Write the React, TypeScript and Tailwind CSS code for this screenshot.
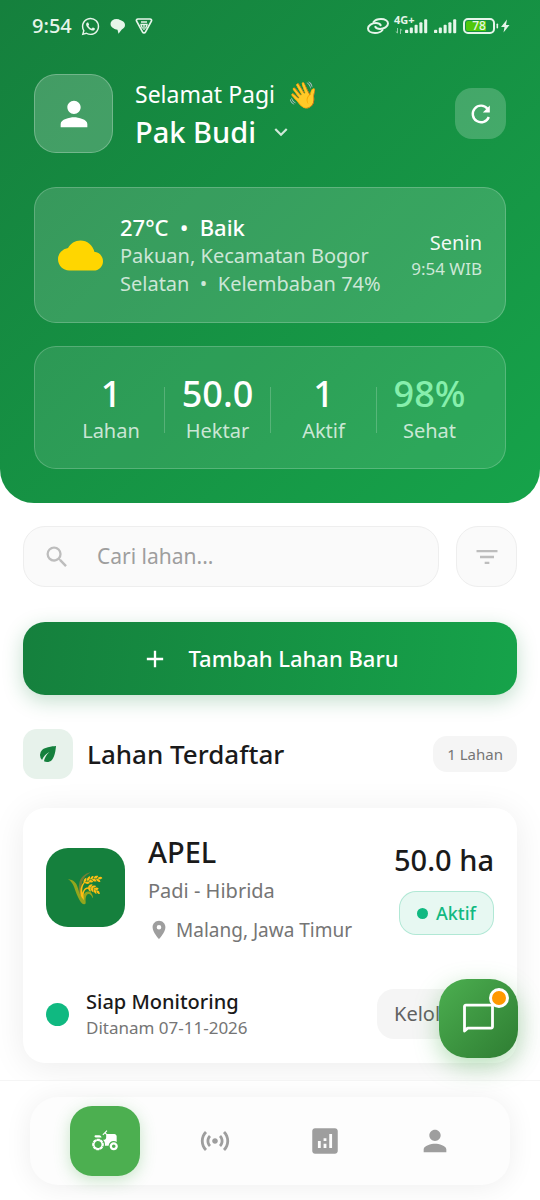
import type { ReactNode } from "react";
import {
  MdAdd,
  MdAgriculture,
  MdAnalytics,
  MdCloud,
  MdEco,
  MdFilterList,
  MdKeyboardArrowDown,
  MdLocationOn,
  MdPerson,
  MdSearch,
  MdSensors,
  MdWhatsapp,
} from "react-icons/md";

function SignalBars() {
  return (
    <svg viewBox="0 0 24 16" className="h-4 w-[23px]" fill="currentColor" aria-hidden="true">
      <rect x="0" y="12" width="3.4" height="3.4" rx="1" />
      <rect x="5" y="9.5" width="3.2" height="6" rx="1" />
      <rect x="10" y="6.8" width="3.2" height="8.7" rx="1" />
      <rect x="15" y="4" width="3.2" height="11.5" rx="1" />
      <rect x="20" y="1" width="3.2" height="14.5" rx="1" />
    </svg>
  );
}

function StatusBar() {
  return (
    <div className="flex h-[52px] items-center justify-between pr-[29px] pl-[32px] text-[#e6f5ea]">
      <div className="flex items-center gap-2">
        <span className="text-[20px] leading-6 font-medium">9:54</span>
        <MdWhatsapp className="h-[21px] w-[21px]" aria-hidden="true" />
        <svg viewBox="0 0 18 18" className="h-[18px] w-[18px]" aria-hidden="true">
          <ellipse cx="7.500" cy="7" rx="6" ry="5" fill="currentColor" />
          <path d="M9.500 3.200c4 0 6.500 2 6.500 4.800 0 2-1.100 3.500-3.200 4.400L9.500 16.800 8.500 12.800C5.200 12.500 3.200 10.600 3.200 8c0-2.800 2.500-4.800 6.300-4.800z" fill="currentColor" />
        </svg>
        <svg viewBox="0 0 18 18" className="h-[18px] w-[18px]" fill="none" stroke="currentColor" aria-hidden="true">
          <path d="M3 2h12c1.300 0 2 1.100 1.400 2.200l-6 10.900c-.6 1.100-2.200 1.100-2.800 0l-6-10.900C1 3.100 1.700 2 3 2z" strokeWidth="1.700" />
          <path d="M6 5h6M5.300 7.500h7.400M6 8l1.500 3.600M12 8l-1.500 3.600M9 8v5" strokeWidth="1.300" />
        </svg>
      </div>
      <div className="flex items-center">
        <svg viewBox="0 0 24 18" className="h-[18px] w-6" fill="none" stroke="currentColor" strokeWidth="2" strokeLinecap="round" aria-hidden="true">
          <path d="M7.500 5C9 3 12 2 15 2c4 0 7 1.800 7 4.500 0 3-4 5.500-8 5.500-2.300 0-4-.8-4.700-2.200" />
          <path d="M16.500 13C15 15 12 16 9 16c-4 0-7-1.800-7-4.500C2 8.500 6 6 10 6c2.300 0 4 .8 4.700 2.200" />
        </svg>
        <div className="relative ml-[5px]">
          <div className="pl-[10px]">
            <SignalBars />
          </div>
          <span className="absolute -top-1 -left-px text-[11px] leading-3 font-bold">4G+</span>
          <svg viewBox="0 0 8 6" className="absolute bottom-0 left-0 h-[6px] w-[8px] opacity-60" fill="none" stroke="currentColor" aria-hidden="true">
            <path d="M2.500 0v5L.8 3.500M5.500 6V1l1.700 1.500" />
          </svg>
        </div>
        <div className="ml-[6px]">
          <SignalBars />
        </div>
        <div className="ml-[6px] flex h-4 w-8 items-center justify-center rounded-[5px] border-2 border-current bg-linear-to-r from-[#50c80c] from-75% to-transparent to-75% bg-clip-content p-px text-[12px] leading-3 font-medium">
          78
        </div>
        <svg viewBox="0 0 14 16" className="h-4 w-[16px]" fill="currentColor" aria-hidden="true">
          <rect x="0.500" y="5.500" width="1.600" height="5" rx="0.800" />
          <path d="M11 1.500 5 9h3.500L7.500 14.500 13.500 7H10z" />
        </svg>
      </div>
    </div>
  );
}

const stats = [
  { value: "1", label: "Lahan", color: "text-white" },
  { value: "50.0", label: "Hektar", color: "text-white" },
  { value: "1", label: "Aktif", color: "text-white" },
  { value: "98%", label: "Sehat", color: "text-[#86efac]" },
];

function Header() {
  return (
    <header className="rounded-b-[34px] bg-linear-to-br from-[#15803d] to-[#16a34a] pb-[34px] text-white">
      <StatusBar />
      <div className="px-[34px] pt-[22px]">
        <div className="flex items-center">
          <div className="flex h-[79px] w-[79px] items-center justify-center rounded-[22px] border border-white/25 bg-white/20">
            <MdPerson className="h-10 w-10" aria-hidden="true" />
          </div>
          <div className="ml-[22px] flex-1">
            <p className="flex items-center gap-3 text-[23px] leading-9">
              Selamat Pagi
              <span className="text-[26px]">👋</span>
            </p>
            <button type="button" className="flex items-center gap-3 text-[29px] leading-10 font-medium">
              Pak Budi
              <MdKeyboardArrowDown className="h-[26px] w-[26px] opacity-80" aria-hidden="true" />
            </button>
          </div>
          <button type="button" aria-label="Muat ulang" className="flex h-[51px] w-[51px] items-center justify-center rounded-[17px] bg-white/20">
            <svg viewBox="0 0 24 24" className="h-6 w-6" fill="none" stroke="currentColor" strokeWidth="2.400" aria-hidden="true">
              <path d="M19.800 15A8.300 8.300 0 1 1 18.500 6.700" />
              <path d="M20.800 3.500v7h-7z" fill="currentColor" stroke="none" />
            </svg>
          </button>
        </div>

        <section className="mt-[34px] flex items-center rounded-[22px] border border-white/20 bg-white/15 px-[23px] py-[24px]">
          <MdCloud className="h-[45px] w-[45px] shrink-0 text-[#ffd600]" aria-hidden="true" />
          <div className="ml-[17px] flex-1">
            <p className="text-[22px] leading-[30px] font-medium whitespace-pre">27°C  •  Baik</p>
            <p className="text-[20px] leading-7 whitespace-nowrap text-white/75">
              Pakuan, Kecamatan Bogor
              <br />
              <span className="whitespace-pre">Selatan  •  Kelembaban 74%</span>
            </p>
          </div>
          <div className="text-right">
            <p className="text-[20px] leading-7 text-white/95">Senin</p>
            <p className="text-[17px] leading-6 whitespace-nowrap text-white/75">9:54 WIB</p>
          </div>
        </section>

        <section className="mt-[23px] flex items-center rounded-[22px] border border-white/20 bg-white/10 px-[23px] pt-[25px] pb-[21px]">
          {stats.map((s, i) => (
            <div key={s.label} className="flex flex-1 items-center">
              {i > 0 && <div className="h-[46px] w-px bg-white/20" />}
              <div className="flex-1 text-center">
                <p className={`text-[36px] leading-[43px] font-medium ${s.color}`}>{s.value}</p>
                <p className="text-[20px] leading-8 text-white/75">{s.label}</p>
              </div>
            </div>
          ))}
        </section>
      </div>
    </header>
  );
}

function FieldCard() {
  return (
    <article className="mt-[29px] rounded-[22px] bg-white p-[23px] shadow-[0_4px_34px_rgba(0,0,0,0.08)]">
      <div className="flex items-center">
        <div className="flex h-[79px] w-[79px] items-center justify-center rounded-[22px] bg-[#15803d] text-[31px]">
          🌾
        </div>
        <div className="ml-[23px] flex-1">
          <h3 className="text-[29px] leading-[42px] font-medium">APEL</h3>
          <p className="text-[20px] leading-9 text-[#757575]">Padi - Hibrida</p>
          <p className="mt-[7px] flex items-center gap-[6px] text-[19px] leading-7 text-[#757575]">
            <MdLocationOn className="h-[22px] w-[22px] text-[#9e9e9e]" aria-hidden="true" />
            Malang, Jawa Timur
          </p>
        </div>
        <div className="flex flex-col items-end gap-[11px]">
          <p className="text-[29px] leading-10 font-medium">50.0 ha</p>
          <span className="flex h-[44px] items-center gap-2 rounded-[17px] border border-[#10b981]/25 bg-[#10b981]/10 px-[17px] text-[18px] font-medium text-[#10b981]">
            <span className="h-[11px] w-[11px] rounded-full bg-[#10b981]" />
            Aktif
          </span>
        </div>
      </div>
      <div className="mt-[44px] flex items-center">
        <span className="h-[23px] w-[23px] rounded-full bg-[#10b981]" />
        <div className="ml-[17px] flex-1">
          <p className="text-[20px] leading-7 font-medium">Siap Monitoring</p>
          <p className="text-[17px] leading-6 text-[#757575]">Ditanam 07-11-2026</p>
        </div>
        <button type="button" className="flex h-[50px] w-[117px] items-center rounded-[17px] bg-[#f5f5f5] pl-[17px] text-[20px] text-[#616161]">
          Kelola
        </button>
      </div>
    </article>
  );
}

function NavItem({ label, active, children }: { label: string; active?: boolean; children: ReactNode }) {
  return (
    <div className="flex flex-1 justify-center">
      <a
        href="#"
        aria-label={label}
        className={
          active
            ? "flex h-[70px] w-[70px] items-center justify-center rounded-[22px] bg-[#4caf50] text-white shadow-[0_4px_16px_rgba(76,175,80,0.3)]"
            : "flex h-[70px] w-[70px] items-center justify-center text-[#9e9e9e]"
        }
      >
        {children}
      </a>
    </div>
  );
}

function BottomNav() {
  return (
    <div className="sticky bottom-0 border-t border-[#f5f5f5] bg-white px-[30px] pt-4 pb-[15px]">
      <button
        type="button"
        aria-label="Obrolan"
        className="absolute right-[22px] bottom-[142px] flex h-[79px] w-[79px] items-center justify-center rounded-[28px] bg-linear-to-br from-[#4caf50] to-[#2e7d32] text-white shadow-[0_8px_24px_rgba(76,175,80,0.4)]"
      >
        <svg viewBox="0 0 32 32" className="h-8 w-8" fill="none" stroke="currentColor" strokeWidth="2.800" strokeLinejoin="round" aria-hidden="true">
          <path d="M1.500 28V3.500a1.400 1.400 0 0 1 1.400-1.400h25.200a1.400 1.400 0 0 1 1.400 1.400v20.200a1.400 1.400 0 0 1-1.400 1.400H4.700z" />
        </svg>
        <span className="absolute top-[9px] right-[9px] h-5 w-5 rounded-full border-[3px] border-white bg-[#ff9800]" />
      </button>
      <nav className="flex h-[88px] items-center rounded-[28px] bg-[#fdfdfd] px-5 shadow-[0_2px_28px_rgba(0,0,0,0.07)]">
        <NavItem label="Lahan" active>
          <MdAgriculture className="h-7 w-7" aria-hidden="true" />
        </NavItem>
        <NavItem label="Sensor">
          <MdSensors className="h-[34px] w-[34px]" aria-hidden="true" />
        </NavItem>
        <NavItem label="Analitik">
          <MdAnalytics className="h-[34px] w-[34px]" aria-hidden="true" />
        </NavItem>
        <NavItem label="Profil">
          <MdPerson className="h-[34px] w-[34px]" aria-hidden="true" />
        </NavItem>
      </nav>
    </div>
  );
}

export default function App() {
  return (
    <div className="flex min-h-screen flex-col bg-white font-['Noto_Sans',sans-serif] text-[#1a1a1a]">
      <Header />
      <main className="flex-1 px-[23px] pt-[23px] pb-[17px]">
        <div className="flex gap-[17px]">
          <label className="flex h-[61px] min-w-0 flex-1 items-center gap-[26px] rounded-[22px] border border-[#eeeeee] bg-[#fafafa] px-[19px]">
            <MdSearch className="h-7 w-7 shrink-0 text-[#bdbdbd]" aria-hidden="true" />
            <input
              type="text"
              aria-label="Cari lahan"
              placeholder="Cari lahan..."
              className="w-full min-w-0 bg-transparent text-[21px] outline-none placeholder:text-[#9e9e9e]"
            />
          </label>
          <button type="button" aria-label="Filter" className="flex h-[61px] w-[61px] items-center justify-center rounded-[22px] border border-[#eeeeee] bg-[#fafafa] text-[#bdbdbd]">
            <MdFilterList className="h-7 w-7" aria-hidden="true" />
          </button>
        </div>

        <button type="button" className="mt-[35px] flex h-[73px] w-full items-center justify-center gap-[19px] rounded-[22px] bg-[linear-gradient(98deg,#15803d,#16a34a)] text-[22px] font-medium text-white shadow-[0_6px_20px_rgba(21,128,61,0.25)]">
          <MdAdd className="h-7 w-7" aria-hidden="true" />
          Tambah Lahan Baru
        </button>

        <div className="mt-[34px] flex items-center">
          <div className="flex h-[50px] w-[50px] items-center justify-center rounded-[14px] bg-[#e7f2eb] text-[#15803d]">
            <MdEco className="h-6 w-6" aria-hidden="true" />
          </div>
          <h2 className="ml-[14px] flex-1 text-[26px] leading-9 font-medium">Lahan Terdaftar</h2>
          <span className="flex h-9 items-center rounded-[14px] bg-[#f5f5f5] px-[14px] text-[15px] text-[#757575]">1 Lahan</span>
        </div>

        <FieldCard />
      </main>
      <BottomNav />
    </div>
  );
}
